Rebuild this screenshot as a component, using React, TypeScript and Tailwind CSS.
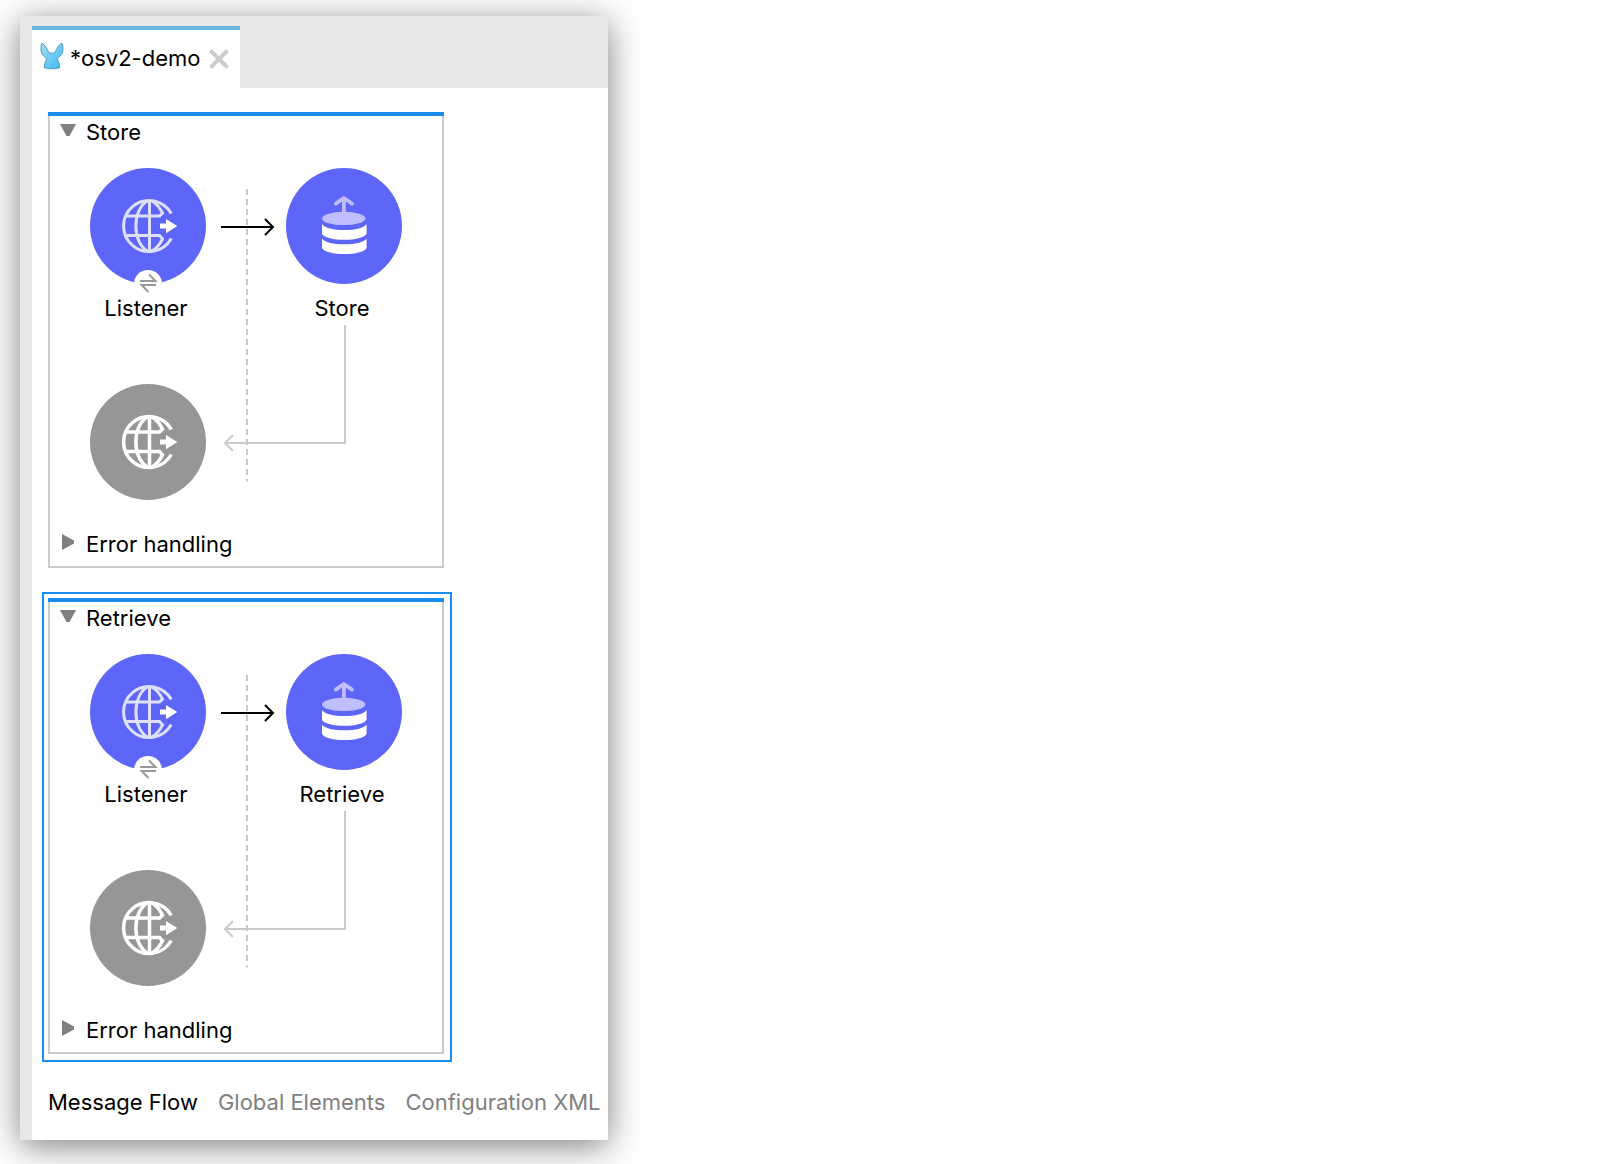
import React, { useState } from "react";

function RabbitLogo() {
  return (
    <svg className="mb-1.5" width="24" height="28" viewBox="0 0 24 28" aria-hidden="true">
      <defs>
        <linearGradient id="rabbit" x1="0" y1="0" x2="1" y2="1">
          <stop offset="0" stopColor="#a3e0f8" />
          <stop offset="1" stopColor="#3db6ee" />
        </linearGradient>
      </defs>
      <path
        d="M2 1.2C4.8 2.8 7.2 6.500 8.700 10.600C10.600 11.400 13.400 11.400 15.100 10.600C16.600 6.500 19 2.800 21.800 1.200C23.400 4.500 23.500 9.500 21.500 12.600C20.200 14.300 18.300 15.600 17.200 16.800C18.600 19.400 19.600 22.500 19.900 25.600C15.500 27.200 8.500 27.200 4.200 25.600C4.400 22.500 5.400 19.400 6.800 16.800C5.600 15.600 3.600 14.300 2.400 12.600C.5 9.500 .6 4.500 2 1.200Z"
        fill="url(#rabbit)"
        stroke="#4a9cc4"
        strokeWidth="1"
      />
    </svg>
  );
}

function GlobeIcon({ line, weight }: { line: string; weight: number }) {
  return (
    <svg width="116" height="116" viewBox="0 0 116 116" aria-hidden="true">
      <g fill="none" stroke={line} strokeWidth={weight}>
        <path d="M81.300 45.500A25.500 25.500 0 1 0 81.300 70.500" />
        <path d="M59.500 32.500V83.500" />
        <path d="M57.500 32.800C42 42 42 74 57.500 83.200" />
        <path d="M61.500 32.800C66.500 35.500 70 40 72.500 45.200L69.500 48H36.500" />
        <path d="M61.500 83.200C66.500 80.500 70 76 72.500 70.800L69.500 67.500H36.500" />
      </g>
      <path d="M70 55.500H76V51L87.300 58L76 65.200V60.500H70Z" fill="#fff" />
    </svg>
  );
}

function StorageIcon() {
  return (
    <svg width="116" height="116" viewBox="0 0 116 116" aria-hidden="true">
      <ellipse cx="57.700" cy="50.400" rx="21.700" ry="6.700" fill="#bfbfff" />
      <path
        d="M57.900 45V30M49.800 35.600L57.900 30L66 35.600"
        fill="none"
        stroke="#bfbfff"
        strokeWidth="3.800"
        strokeLinecap="round"
        strokeLinejoin="round"
      />
      <path d="M36 56C39 60 47 62 58.300 62S77.500 60 80.600 56V66C78 69.800 69 71.800 58.300 71.800S38.500 69.800 36 66Z" fill="#fff" />
      <path d="M36 70.500C39 74.500 47 76.300 58.300 76.300S77.500 74.500 80.600 70.500V80C78 84 69 86 58.300 86S38.500 84 36 80Z" fill="#fff" />
    </svg>
  );
}

function ExchangeBadge() {
  return (
    <span className="absolute left-11 top-[102px] size-7 rounded-full bg-white">
      <svg width="28" height="28" viewBox="0 0 28 28" aria-hidden="true">
        <path d="M6 11H21.500L15 4.500M22 15H7.700L14.500 22" fill="none" stroke="#999" strokeWidth="2" />
      </svg>
    </span>
  );
}

function Connectors() {
  return (
    <svg className="absolute inset-0 h-full w-full" fill="none" strokeWidth="2" aria-hidden="true">
      <path d="M197 21V313.500" stroke="#cacaca" strokeDasharray="6 4" />
      <path d="M171 59H223M215 51L223 59L215 67" stroke="#000" />
      <path d="M295 157V275H175.500M183 267L175 275L183 283" stroke="#cacaca" />
    </svg>
  );
}

function Flow({ name }: { name: string }) {
  const [open, setOpen] = useState(true);
  return (
    <section className="w-[396px] border-2 border-t-0 border-[#cacaca] bg-white pb-1.5">
      <div className="-mx-0.5 h-1 bg-[#1a8cf0]" />
      <button className="flex h-8 w-full items-center gap-2.5 pl-2.5" onClick={() => setOpen(!open)}>
        <svg className="mb-1" width="16" height="12" aria-hidden="true">
          <path d="M0 0H16L9.500 12H6.500Z" fill="#808080" />
        </svg>
        <span>{name}</span>
      </button>
      {open && (
        <div className="relative mt-5 pl-10">
          <Connectors />
          <div className="flex gap-20">
            <figure className="relative w-[116px]">
              <div className="rounded-full bg-[#5e66f9]">
                <GlobeIcon line="#dfe0fe" weight={3} />
              </div>
              <ExchangeBadge />
              <figcaption className="mt-2.5 pr-1 text-center">Listener</figcaption>
            </figure>
            <figure className="w-[116px]">
              <div className="rounded-full bg-[#5e66f9]">
                <StorageIcon />
              </div>
              <figcaption className="mt-2.5 pr-1 text-center">{name}</figcaption>
            </figure>
          </div>
          <div className="mt-[62px] size-[116px] rounded-full bg-[#969696]">
            <GlobeIcon line="#fff" weight={3.5} />
          </div>
        </div>
      )}
      <button className="mt-7 flex h-8 w-full items-center gap-3 pl-3">
        <svg className="mb-1" width="12" height="16" aria-hidden="true">
          <path d="M0 0V16L12 9.500V6.500Z" fill="#808080" />
        </svg>
        <span>Error handling</span>
      </button>
    </section>
  );
}

export default function App() {
  const [view, setView] = useState("Message Flow");
  return (
    <div className="min-h-screen overflow-hidden bg-white pb-6 pl-5 pt-4 font-['Inter',sans-serif] text-[22px] leading-7 text-black">
      <main className="w-[588px] bg-[#e7e8ea] pl-3 shadow-[0_6px_32px_rgba(0,0,0,0.5)]">
        <header className="pt-2.5">
          <div className="flex h-[62px] w-52 items-center border-t-4 border-[#69b7e0] bg-white pl-2">
            <RabbitLogo />
            <span className="mb-0.5 ml-1.5 flex-1">*osv2-demo</span>
            <button aria-label="Close tab" className="mr-2.5">
              <svg width="22" height="22" viewBox="0 0 22 22" aria-hidden="true">
                <path d="M2.500 2.500L19.500 19.500M19.500 2.500L2.500 19.500" stroke="#ccc" strokeWidth="4" />
              </svg>
            </button>
          </div>
        </header>
        <div className="bg-white pb-6 pl-2.5 pt-6">
          <div className="pl-1.5">
            <Flow name="Store" />
          </div>
          <div className="mt-6 w-fit border-2 border-[#1a8cf0] pb-1.5 pl-1 pr-1.5 pt-1">
            <Flow name="Retrieve" />
          </div>
          <nav className="mt-[26px] flex gap-5 pl-1.5">
            {["Message Flow", "Global Elements", "Configuration XML"].map((tab) => (
              <button
                key={tab}
                onClick={() => setView(tab)}
                className={view === tab ? "whitespace-nowrap text-black" : "whitespace-nowrap text-[#808080]"}
              >
                {tab}
              </button>
            ))}
          </nav>
        </div>
      </main>
    </div>
  );
}
